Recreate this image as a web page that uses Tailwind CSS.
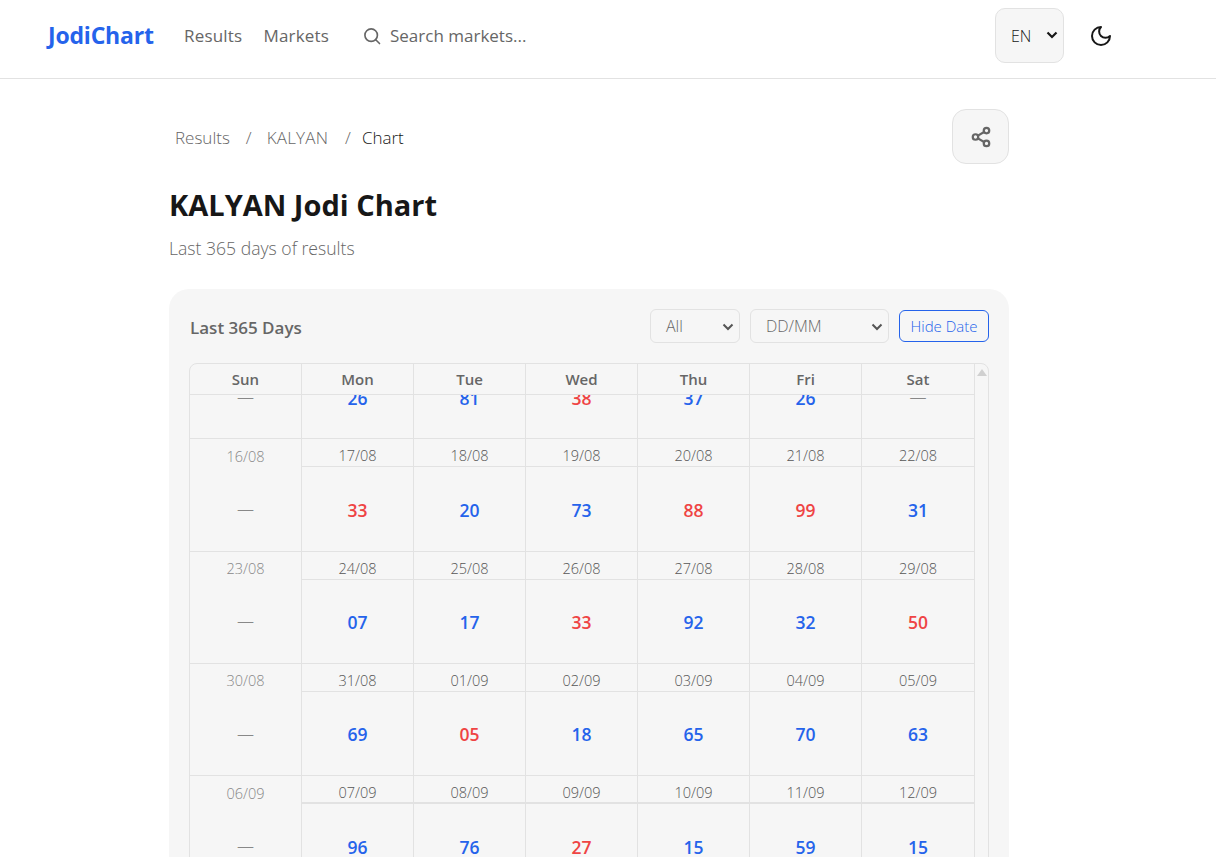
<!DOCTYPE html>
<html lang="en">

<head>
  <meta charset="UTF-8" />
  <title>KALYAN Jodi Chart</title>
  <script src="https://cdn.jsdelivr.net/npm/@tailwindcss/browser@4"></script>
</head>

<body class="bg-white h-screen overflow-hidden font-['Open_Sans',sans-serif] text-[#171717]">

  <!-- Header -->
  <header class="h-[79px] border-b border-[#e2e2e2] flex items-start pt-2 pl-12">
    <div class="h-[55px] flex items-center">
      <a class="text-[23px] font-bold text-[#2563eb] w-[136px] tracking-[-0.2px]">JodiChart</a>
      <nav class="flex gap-[21px] text-[17px] tracking-[0.2px] font-medium text-[#666] w-[178px]">
        <a>Results</a>
        <a>Markets</a>
      </nav>
      <div class="flex items-center gap-2 w-[633px] text-[17px] font-medium text-[#666]">
        <svg class="w-5 h-5" viewBox="0 0 24 24" fill="none" stroke="#666" stroke-width="2" stroke-linecap="round" stroke-linejoin="round"><circle cx="11" cy="11" r="7.5"/><path d="m21 21-4.5-4.5"/></svg>
        <span>Search markets...</span>
      </div>
      <div class="relative w-[69px] h-[55px] rounded-[10px] border border-[#e2e2e2] bg-[#f6f6f6] flex items-center pl-[15px] text-[16px] font-light">
        EN
        <svg class="absolute right-[5px] top-[20px] w-3 h-3" viewBox="0 0 12 12" fill="none" stroke="#171717" stroke-width="2.2"><path d="m1.5 3.5 4.5 4.5 4.5-4.5"/></svg>
      </div>
      <svg class="w-6 h-6 ml-[25px]" viewBox="0 0 24 24" fill="none" stroke="#171717" stroke-width="2" stroke-linecap="round" stroke-linejoin="round"><path d="M12 3a6 6 0 0 0 9 9 9 9 0 1 1-9-9Z"/></svg>
    </div>
  </header>

  <main class="w-[840px] ml-[169px]">
    <!-- Breadcrumb -->
    <div class="flex items-center justify-between pt-[30px]">
      <div class="flex text-[17px] font-light text-[#666] pl-[6px] pt-[2px]">
        <a>Results</a>
        <span class="ml-[16px]">/</span>
        <a class="ml-[15px] tracking-[0.2px]">KALYAN</a>
        <span class="ml-[17px]">/</span>
        <span class="ml-[11px] text-[#171717]">Chart</span>
      </div>
      <button class="w-[57px] h-[55px] rounded-[14px] border border-[#e2e2e2] bg-[#f6f6f6] flex items-center justify-center">
        <svg class="w-[22px] h-[22px]" viewBox="0 0 24 24" fill="none" stroke="#666" stroke-width="2.4" stroke-linecap="round" stroke-linejoin="round"><circle cx="18" cy="5" r="3"/><circle cx="6" cy="12" r="3"/><circle cx="18" cy="19" r="3"/><path d="m8.6 13.5 6.8 4"/><path d="m15.4 6.5-6.8 4"/></svg>
      </button>
    </div>

    <h1 class="text-[29px] font-bold leading-[38px] mt-[22px]">KALYAN Jodi Chart</h1>
    <p class="text-[17.6px] font-light text-[#666] leading-6 mt-[12px]">Last 365 days of results</p>

    <!-- Chart card -->
    <section class="mt-[29px] bg-[#f6f6f6] rounded-[20px] p-5 h-[700px]">
      <div class="flex items-center h-[34px]">
        <h2 class="text-[17px] font-semibold text-[#666] mr-auto pl-px pt-[3px]">Last 365 Days</h2>
        <div class="relative w-[90px] h-[34px] rounded-md border border-[#e2e2e2] flex items-center pl-[15px] text-[16px] font-light text-[#666]">
          All
          <svg class="absolute right-[5px] top-[11px] w-3 h-3" viewBox="0 0 12 12" fill="none" stroke="#555" stroke-width="2"><path d="m1.5 3.5 4.5 4.5 4.5-4.5"/></svg>
        </div>
        <div class="relative w-[139px] h-[34px] ml-[10px] rounded-md border border-[#e2e2e2] flex items-center pl-[15px] text-[16px] font-light text-[#666]">
          DD/MM
          <svg class="absolute right-[5px] top-[11px] w-3 h-3" viewBox="0 0 12 12" fill="none" stroke="#555" stroke-width="2"><path d="m1.5 3.5 4.5 4.5 4.5-4.5"/></svg>
        </div>
        <button class="w-[90px] h-[32px] ml-[10px] rounded-md border border-[#2563eb] text-[15px] font-light text-[#2563eb]">Hide Date</button>
      </div>

      <div class="mt-5 h-[600px] rounded-t-lg border border-[#e2e2e2] flex overflow-hidden">
        <div class="w-[784px] flex flex-col">
          <div id="head" class="grid grid-cols-[repeat(7,112px)] h-[31px] border-b border-[#e2e2e2] text-[15px] font-semibold text-[#666]"></div>
          <div class="overflow-hidden flex-1">
            <div id="rows" class="-mt-[68px]"></div>
          </div>
        </div>
        <!-- scrollbar -->
        <div class="flex-1 border-l border-[#e2e2e2] flex justify-center pt-[5px]">
          <div class="w-0 h-0 border-x-[5px] border-x-transparent border-b-[7px] border-b-[#d0d0d0]"></div>
        </div>
      </div>
    </section>
  </main>

  <script>
    const days = ['Sun', 'Mon', 'Tue', 'Wed', 'Thu', 'Fri', 'Sat'];
    // r = red, b = blue
    const weeks = [
      { dates: ['', '', '', '', '', '', ''], vals: ['-', 'b26', 'b81', 'r38', 'b37', 'b26', '-'] },
      { dates: ['16/08', '17/08', '18/08', '19/08', '20/08', '21/08', '22/08'], vals: ['-', 'r33', 'b20', 'b73', 'r88', 'r99', 'b31'] },
      { dates: ['23/08', '24/08', '25/08', '26/08', '27/08', '28/08', '29/08'], vals: ['-', 'b07', 'b17', 'r33', 'b92', 'b32', 'r50'] },
      { dates: ['30/08', '31/08', '01/09', '02/09', '03/09', '04/09', '05/09'], vals: ['-', 'b69', 'r05', 'b18', 'b65', 'b70', 'b63'] },
      { dates: ['06/09', '07/09', '08/09', '09/09', '10/09', '11/09', '12/09'], vals: ['-', 'b96', 'b76', 'r27', 'b15', 'b59', 'b15'], thick: true },
    ];

    document.getElementById('head').innerHTML = days.map(d =>
      `<div class="flex items-center justify-center border-r border-[#e2e2e2] last:border-r-0">${d}</div>`
    ).join('');

    document.getElementById('rows').innerHTML = weeks.map(w => `
      <div class="grid grid-cols-[repeat(7,112px)] h-[112.25px] border-b border-[#e2e2e2]">
        ${w.vals.map((v, i) => {
          if (v === '-') {
            return `<div class="border-r border-[#e2e2e2] last:border-r-0 flex flex-col">
              <div class="h-[28px] pt-[7px] flex items-center justify-center text-[14.5px] font-light text-[#888]">${w.dates[i]}</div>
              <div class="flex-1 flex items-center justify-center text-[17px] font-light text-[#888]">—</div>
            </div>`;
          }
          const color = v[0] === 'r' ? 'text-[#ef4444]' : 'text-[#2563eb]';
          const line = w.thick ? 'border-b-2' : 'border-b';
          return `<div class="border-r border-[#e2e2e2] last:border-r-0 flex flex-col">
            <div class="h-[28px] pt-[7px] flex items-center justify-center ${line} border-[#e2e2e2] text-[14.5px] font-light text-[#555]">${w.dates[i]}</div>
            <div class="flex-1 pt-[2px] flex items-center justify-center text-[17.5px] font-semibold ${color}">${v.slice(1)}</div>
          </div>`;
        }).join('')}
      </div>`).join('');
  </script>
</body>

</html>
